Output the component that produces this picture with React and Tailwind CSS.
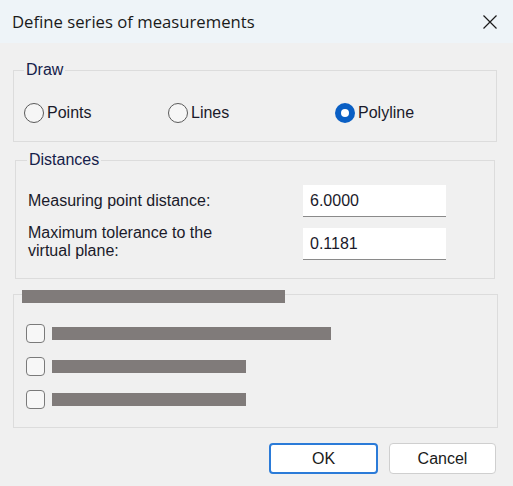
import React from 'react';

const font = { fontFamily: '"Liberation Sans", Arial, sans-serif' };

function Radio({ label, checked, className = '' }) {
  return (
    <label className={`flex items-center gap-[3px] ${className}`}>
      {checked ? (
        <span className="flex h-[20px] w-[20px] items-center justify-center rounded-full bg-[#0a5fc4]">
          <span className="h-[8px] w-[8px] rounded-full bg-white" />
        </span>
      ) : (
        <span className="h-[20px] w-[20px] rounded-full border border-[#5a5a5a] bg-[#f6f6f6]" />
      )}
      <span className="leading-[20px]">{label}</span>
    </label>
  );
}

function Checkbox({ barWidth }) {
  return (
    <div className="flex items-center gap-[7px]">
      <span className="h-[19px] w-[19px] rounded-[4px] border-[1.5px] border-[#7a7a7a] bg-[#f7f7f7]" />
      <span className="h-[13px] bg-[#807b7a]" style={{ width: barWidth }} />
    </div>
  );
}

export default function App() {
  return (
    <div className="h-[486px] w-[513px] overflow-hidden bg-[#f0f0f0] text-[16px] text-[#1a1a2a]" style={font}>
      {/* title bar */}
      <div className="flex h-[43px] items-center justify-between bg-[#eef4f8] pl-[12px] pr-[15px]">
        <span className="text-[16.7px] text-[#1a1a1a]" style={{ fontFamily: '"Open Sans", "Noto Sans", sans-serif' }}>
          Define series of measurements
        </span>
        <svg width="16" height="16" viewBox="0 0 16 16" className="text-[#1a1a1a]">
          <path d="M1.5 1.5 L14.5 14.5 M14.5 1.5 L1.5 14.5" stroke="currentColor" strokeWidth="1.2" fill="none" />
        </svg>
      </div>

      {/* Draw */}
      <fieldset className="ml-[13px] mr-[16px] mt-[19px] border border-[#dcdcdc]">
        <legend className="ml-[10px] px-[2px] leading-[16px] text-[#15204a]">Draw</legend>
        <div className="flex pl-[10px] pt-[25px] pb-[18px]">
          <Radio label="Points" className="w-[144px]" />
          <Radio label="Lines" className="w-[167px]" />
          <Radio label="Polyline" checked />
        </div>
      </fieldset>

      {/* Distances */}
      <fieldset className="ml-[15px] mr-[18px] mt-[10px] border border-[#dcdcdc]">
        <legend className="ml-[11px] px-[2px] leading-[16px] text-[#15204a]">Distances</legend>
        <div className="flex flex-col gap-[11px] pl-[12px] pt-[17px] pb-[18px]">
          <div className="flex items-center">
            <span className="w-[275px]">Measuring point distance:</span>
            <div className="flex h-[32px] w-[143px] items-center border-b border-[#8a8a8a] bg-white pl-[7px]">6.0000</div>
          </div>
          <div className="flex h-[32px] items-start">
            <span className="-mt-[4px] w-[275px] leading-[18px]">
              Maximum tolerance to the
              <br />
              virtual plane:
            </span>
            <div className="flex h-[32px] w-[143px] items-center border-b border-[#8a8a8a] bg-white pl-[7px]">0.1181</div>
          </div>
        </div>
      </fieldset>

      {/* options */}
      <fieldset className="ml-[13px] mr-[15px] mt-[11px] border border-[#dcdcdc]">
        <legend className="ml-[8px] h-[8px]">
          <div className="h-[13px] w-[263px] bg-[#807b7a]" />
        </legend>
        <div className="flex flex-col gap-[14px] pl-[12px] pt-[26px] pb-[18px]">
          <Checkbox barWidth={279} />
          <Checkbox barWidth={194} />
          <Checkbox barWidth={194} />
        </div>
      </fieldset>

      {/* buttons */}
      <div className="mt-[15px] flex justify-end gap-[11px] pr-[17px]">
        <button className="h-[31px] w-[109px] rounded-[4px] border-2 border-[#2b7bd8] bg-white text-[#1a1a1a]">OK</button>
        <button className="h-[31px] w-[107px] rounded-[4px] border border-[#cfcfcf] bg-white text-[#1a1a1a]">Cancel</button>
      </div>
    </div>
  );
}
